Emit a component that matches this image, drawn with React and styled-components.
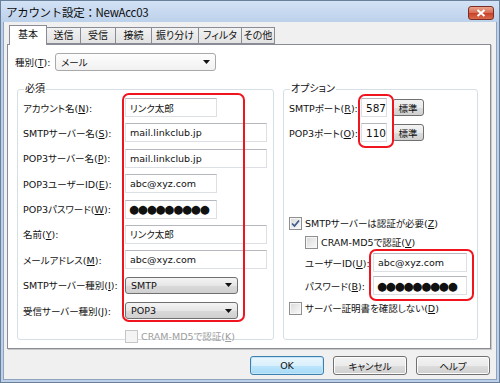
import React from 'react';
import styled, { createGlobalStyle } from 'styled-components';

const Global = createGlobalStyle`
  html, body { margin: 0; padding: 0; background: #fff; }
  body {
    width: 500px; height: 383px; overflow: hidden;
    font-family: "DejaVu Sans", "Noto Sans CJK JP", sans-serif;
    font-size: 9.5px; color: #111;
    font-feature-settings: "palt";
  }
`;

const Window = styled.div`
  position: relative;
  width: 500px; height: 383px;
  box-sizing: border-box;
  display: flex; flex-direction: column;
  background: #bcd0ea;
  border: 1px solid #6a7f99;
  padding: 0 2px 2px 2px;
`;

const TitleBar = styled.div`
  height: 21px;
  margin: 0 -2px;
  padding: 0 5px;
  display: flex; align-items: center; justify-content: space-between;
  background: linear-gradient(#d3e2f5, #bcd1eb);
`;

const Title = styled.span`
  font-family: "Noto Sans CJK JP", sans-serif;
  font-size: 11.5px;
  color: #0d0d0d;
  padding-top: 1px;
  font-feature-settings: normal;
  letter-spacing: -0.3px;
`;

const CloseBtn = styled.div`
  width: 26px; height: 14px;
  margin-top: 2px;
  box-sizing: border-box;
  border: 1px solid #7d2e22;
  border-radius: 3px;
  background: linear-gradient(#eaa58f, #d7684f 50%, #c7402a 51%, #d86a4c);
  display: flex; align-items: center; justify-content: center;
`;

const Body = styled.div`
  flex: 1;
  background: #f0f0f0;
  border: 1px solid #8ea3bd;
  border-top: none;
  padding: 3px 6px 4px 2px;
  display: flex; flex-direction: column;
`;

const TabStrip = styled.div`
  display: flex;
  align-items: flex-end;
  height: 19px;
  padding-left: 4px;
  position: relative;
  z-index: 1;
`;

const Tab = styled.div`
  box-sizing: border-box;
  width: ${p => p.$w}px;
  height: ${p => (p.$active ? '20px' : '17px')};
  margin-bottom: ${p => (p.$active ? '-1px' : '0')};
  border: 1px solid #898c95;
  border-bottom: ${p => (p.$active ? 'none' : '1px solid #898c95')};
  margin-left: -1px;
  background: ${p => (p.$active ? '#fff' : 'linear-gradient(#f2f2f2, #e3e3e3)')};
  display: flex; align-items: center; justify-content: center;
  font-size: 10px;
  line-height: 1;
  padding-bottom: ${p => (p.$active ? '2px' : '0')};
  white-space: nowrap;
`;

const Panel = styled.div`
  box-sizing: border-box;
  width: 484px; height: 305px;
  margin-left: 1px;
  background: #fff;
  border: 1px solid #898c95;
  box-shadow: 1px 1px 0 #c8c8c8;
  padding: 8px 7px 0 7px;
`;

const TypeRow = styled.div`
  display: flex; align-items: center;
  height: 18px;
`;

const TypeLabel = styled.span`
  width: 40px;
  white-space: nowrap;
`;

const Combo = styled.div`
  box-sizing: border-box;
  width: ${p => p.$w}px;
  height: ${p => p.$h}px;
  border: 1px solid ${p => (p.$flat ? '#a9a9a9' : '#707070')};
  border-radius: 3px;
  background: ${p => (p.$flat ? 'linear-gradient(#fdfdfd, #f1f1f1)' : 'linear-gradient(#f4f4f4, #e6e6e6 50%, #dadada 51%, #d0d0d0)')};
  display: flex; align-items: center; justify-content: space-between;
  padding: 0 5px 0 5px;
  white-space: nowrap;
`;

const Arrow = () => (
  <svg width="7" height="4" viewBox="0 0 7 4"><path d="M0 0H7L3.5 4Z" fill="#111" /></svg>
);

const Groups = styled.div`
  display: flex;
  gap: 9px;
  margin-top: 11px;
  padding-left: 2px;
`;

const Group = styled.fieldset`
  box-sizing: border-box;
  margin: 0;
  width: ${p => p.$w}px;
  height: 258px;
  border: 1px solid #d5dfe5;
  border-radius: 3px;
  padding: 0 6px 0 5px;
  min-width: 0;
`;

const Legend = styled.legend`
  padding: 0 1px;
  margin-left: 1px;
  line-height: 14px;
  font-size: 10px;
`;

const FieldGrid = styled.div`
  display: grid;
  grid-template-columns: ${p => p.$cols};
  grid-auto-rows: 19px;
  row-gap: ${p => p.$gap}px;
  align-items: center;
  margin-top: ${p => p.$mt || 0}px;
  margin-left: ${p => p.$ml || 0}px;
`;

const Label = styled.span`
  white-space: nowrap;
`;

const TextBox = styled.div`
  box-sizing: border-box;
  width: ${p => p.$w}px;
  height: 19px;
  border: 1px solid #dcdfe4;
  border-top-color: #b5b8bf;
  background: #fff;
  padding: 0 0 0 ${p => (p.$dots ? '3px' : '4px')};
  display: flex; align-items: center;
  white-space: nowrap;
  overflow: hidden;
  font-size: ${p => (p.$dots ? '11.5px' : p.$big ? '10.5px' : '9.5px')};
  letter-spacing: ${p => (p.$dots ? '-1.2px' : '0')};
`;

const CheckRow = styled.div`
  display: flex; align-items: center;
  gap: 3px;
  height: 14px;
  margin-top: ${p => p.$mt || 0}px;
  margin-left: ${p => p.$ml || 0}px;
  color: ${p => (p.$disabled ? '#9d9d9d' : 'inherit')};
  white-space: nowrap;
`;

const Box = styled.span`
  box-sizing: border-box;
  width: 13px; height: 13px;
  border: 1px solid ${p => (p.$disabled ? '#c6c6c6' : '#8e8f8f')};
  background: ${p => (p.$disabled ? '#f4f4f4' : 'linear-gradient(135deg, #d8d8d8, #fbfbfb)')};
  box-shadow: inset 0 0 0 1px ${p => (p.$disabled ? '#f4f4f4' : '#f6f6f6')};
  display: inline-flex; align-items: center; justify-content: center;
`;

const Check = ({ checked, disabled }) => (
  <Box $disabled={disabled}>
    {checked && (
      <svg width="9" height="9" viewBox="0 0 9 9"><path d="M1 4.5L3.5 7L8 1.5" fill="none" stroke="#3d5a8c" strokeWidth="1.7" /></svg>
    )}
  </Box>
);

const SmallBtn = styled.div`
  box-sizing: border-box;
  width: 32px; height: 17px;
  border: 1px solid #707070;
  border-radius: 3px;
  background: linear-gradient(#f2f2f2, #ebebeb 50%, #dddddd 51%, #cfcfcf);
  display: flex; align-items: center; justify-content: center;
`;

const PortRow = styled.div`
  display: flex; align-items: center; gap: 5px;
`;

const RightCol = styled.div`
  display: flex; flex-direction: column;
  margin-top: 2px;
`;

const PortGrid = styled.div`
  display: grid;
  grid-template-columns: 72px auto;
  grid-auto-rows: 19px;
  row-gap: 6px;
  align-items: center;
`;

const ButtonRow = styled.div`
  display: flex; justify-content: flex-end;
  gap: 9px;
  margin-top: 7px;
`;

const Button = styled.div`
  box-sizing: border-box;
  width: 74px; height: 19px;
  border: 1px solid ${p => (p.$default ? '#3c7fb1' : '#707070')};
  border-radius: 3px;
  background: ${p => (p.$default
    ? 'linear-gradient(#eaf6fd, #d9f0fc 50%, #bee6fd 51%, #a7d9f5)'
    : 'linear-gradient(#f2f2f2, #ebebeb 50%, #dddddd 51%, #cfcfcf)')};
  box-shadow: ${p => (p.$default ? 'inset 0 0 0 1px #c4e5f6' : 'inset 0 0 0 1px #fcfcfc')};
  display: flex; align-items: center; justify-content: center;
`;

const Highlight = styled.div`
  position: absolute;
  box-sizing: border-box;
  border: 2px solid #f0141e;
  border-radius: 7px;
  pointer-events: none;
`;

const DOTS = '●●●●●●●●●';

const TABS = [
  ['基本', 38, true], ['送信', 35], ['受信', 36], ['接続', 37],
  ['振り分け', 48], ['フィルタ', 44], ['その他', 34],
];

export default function App() {
  return (
    <>
      <Global />
      <Window>
        <TitleBar>
          <Title>アカウント設定：NewAcc03</Title>
          <CloseBtn>
            <svg width="10" height="8" viewBox="0 0 10 8"><path d="M1.5 1L8.5 7M8.5 1L1.5 7" stroke="#fff" strokeWidth="2" /></svg>
          </CloseBtn>
        </TitleBar>
        <Body>
          <TabStrip>
            {TABS.map(([t, w, a]) => (
              <Tab key={t} $w={w} $active={a}>{t}</Tab>
            ))}
          </TabStrip>
          <Panel>
            <TypeRow>
              <TypeLabel>種別(<u>T</u>):</TypeLabel>
              <Combo $w={161} $h={18} $flat>
                <span>メール</span>
                <Arrow />
              </Combo>
            </TypeRow>
            <Groups>
              <Group $w={257}>
                <Legend>必須</Legend>
                <FieldGrid $cols="102px 1fr" $gap={6.4} $mt={2}>
                  <Label>アカウント名(<u>N</u>):</Label>
                  <TextBox $w={92}>リンク太郎</TextBox>
                  <Label>SMTPサーバー名(<u>S</u>):</Label>
                  <TextBox $w={142}>mail.linkclub.jp</TextBox>
                  <Label>POP3サーバー名(<u>P</u>):</Label>
                  <TextBox $w={142}>mail.linkclub.jp</TextBox>
                  <Label>POP3ユーザーID(<u>E</u>):</Label>
                  <TextBox $w={92}>abc@xyz.com</TextBox>
                  <Label>POP3パスワード(<u>W</u>):</Label>
                  <TextBox $w={92} $dots>{DOTS}</TextBox>
                  <Label>名前(<u>Y</u>):</Label>
                  <TextBox $w={142}>リンク太郎</TextBox>
                  <Label>メールアドレス(<u>M</u>):</Label>
                  <TextBox $w={142}>abc@xyz.com</TextBox>
                  <Label>SMTPサーバー種別(<u>I</u>):</Label>
                  <Combo $w={113} $h={17}>
                    <span>SMTP</span>
                    <Arrow />
                  </Combo>
                  <Label>受信サーバー種別(<u>J</u>):</Label>
                  <Combo $w={113} $h={17}>
                    <span>POP3</span>
                    <Arrow />
                  </Combo>
                </FieldGrid>
                <CheckRow $disabled $mt={9} $ml={102}>
                  <Check disabled />
                  <span>CRAM-MD5で認証(<u>K</u>)</span>
                </CheckRow>
              </Group>
              <Group $w={195}>
                <Legend>オプション</Legend>
                <RightCol>
                  <PortGrid>
                    <Label>SMTPポート(<u>R</u>):</Label>
                    <PortRow>
                      <TextBox $w={26} $big>587</TextBox>
                      <SmallBtn>標準</SmallBtn>
                    </PortRow>
                    <Label>POP3ポート(<u>O</u>):</Label>
                    <PortRow>
                      <TextBox $w={26} $big>110</TextBox>
                      <SmallBtn>標準</SmallBtn>
                    </PortRow>
                  </PortGrid>
                  <CheckRow $mt={74}>
                    <Check checked />
                    <span>SMTPサーバーは認証が必要(<u>Z</u>)</span>
                  </CheckRow>
                  <CheckRow $mt={5} $ml={16}>
                    <Check />
                    <span>CRAM-MD5で認証(<u>V</u>)</span>
                  </CheckRow>
                  <FieldGrid $cols="68px 1fr" $gap={4} $mt={4} $ml={16}>
                    <Label>ユーザーID(<u>U</u>):</Label>
                    <TextBox $w={94}>abc@xyz.com</TextBox>
                    <Label>パスワード(<u>B</u>):</Label>
                    <TextBox $w={94} $dots>{DOTS}</TextBox>
                  </FieldGrid>
                  <CheckRow $mt={6}>
                    <Check />
                    <span>サーバー証明書を確認しない(<u>D</u>)</span>
                  </CheckRow>
                </RightCol>
              </Group>
            </Groups>
          </Panel>
          <ButtonRow>
            <Button $default>OK</Button>
            <Button>キャンセル</Button>
            <Button>ヘルプ</Button>
          </ButtonRow>
        </Body>
        <Highlight style={{ left: 121, top: 92, width: 123, height: 229 }} />
        <Highlight style={{ left: 357, top: 93, width: 36, height: 54 }} />
        <Highlight style={{ left: 368, top: 248, width: 105, height: 52 }} />
      </Window>
    </>
  );
}
